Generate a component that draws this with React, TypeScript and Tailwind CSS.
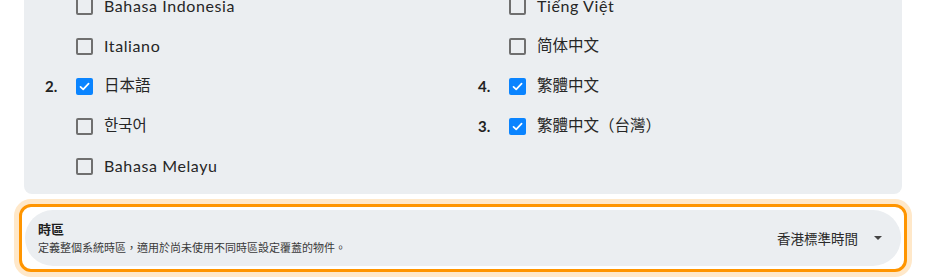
import React from "react";

type Item = { label: string; checked?: boolean; order?: string; latin?: boolean };

const left: Item[] = [
  { label: "Bahasa Indonesia", latin: true },
  { label: "Italiano", latin: true },
  { label: "日本語", checked: true, order: "2." },
  { label: "한국어" },
  { label: "Bahasa Melayu", latin: true },
];

const right: Item[] = [
  { label: "Tiếng Việt", latin: true },
  { label: "简体中文" },
  { label: "繁體中文", checked: true, order: "4." },
  { label: "繁體中文（台灣）", checked: true, order: "3." },
];

function Box({ checked }: { checked?: boolean }) {
  if (checked) {
    return (
      <span className="flex h-[17px] w-[17px] items-center justify-center rounded-[2px] bg-[#0a84ff]">
        <svg width="13" height="13" viewBox="0 0 13 13" fill="none">
          <path d="M2.5 6.8 L5.2 9.4 L10.6 3.6" stroke="#fff" strokeWidth="1.7" strokeLinecap="round" strokeLinejoin="round" />
        </svg>
      </span>
    );
  }
  return <span className="block h-[17px] w-[17px] rounded-[2px] border-2 border-[#6f6f6f] bg-transparent" />;
}

function Row({ item }: { item: Item }) {
  return (
    <div className="flex h-[40px] items-center">
      <span className="w-[31px] text-[15px] font-bold text-[#222]">{item.order ?? ""}</span>
      <Box checked={item.checked} />
      {item.latin ? (
        <span className="ml-[11px] text-[16px] tracking-[0.6px] text-[#262626]">{item.label}</span>
      ) : (
        <span className="ml-[11px] text-[15.5px] text-[#262626]">{item.label}</span>
      )}
    </div>
  );
}

export default function App() {
  return (
    <div
      className="h-[280px] w-[926px] overflow-hidden bg-white px-[24px]"
      style={{ fontFamily: '"Lato", "Noto Sans CJK TC", sans-serif' }}
    >
      <div className="-mt-[14px] rounded-b-[8px] bg-[#ebeef1] pb-[8px] pl-[21px]">
        <div className="grid grid-cols-[433px_1fr]">
          <div className="flex flex-col">
            {left.map((it) => (
              <Row key={it.label} item={it} />
            ))}
          </div>
          <div className="flex flex-col">
            {right.map((it) => (
              <Row key={it.label} item={it} />
            ))}
          </div>
        </div>
      </div>

      <div className="mx-[-5px] mt-[10px] rounded-[12px] border-[3px] border-[#ff9500] bg-white p-[3px] shadow-[0_0_0_5px_#ffe8c9]">
        <div className="flex h-[56px] items-center rounded-[28px] bg-[#ebeef1] pl-[13px] pr-[19px]">
          <div className="-mt-[1px] flex flex-1 flex-col" style={{ fontFamily: '"Noto Sans CJK TC", sans-serif' }}>
            <span className="text-[13px] font-bold leading-[18px] text-[#1f1f1f]">時區</span>
            <span className="mt-[1px] text-[11px] leading-[16px] text-[#3a3a3a]">
              定義整個系統時區，適用於尚未使用不同時區設定覆蓋的物件。
            </span>
          </div>
          <span
            className="text-[13.5px] text-[#2a2a2a]"
            style={{ fontFamily: '"Noto Sans CJK TC", sans-serif' }}
          >
            香港標準時間
          </span>
          <svg className="ml-[16px]" width="8" height="4" viewBox="0 0 8 4">
            <path d="M0 0 H8 L4 4 Z" fill="#444" />
          </svg>
        </div>
      </div>
    </div>
  );
}
